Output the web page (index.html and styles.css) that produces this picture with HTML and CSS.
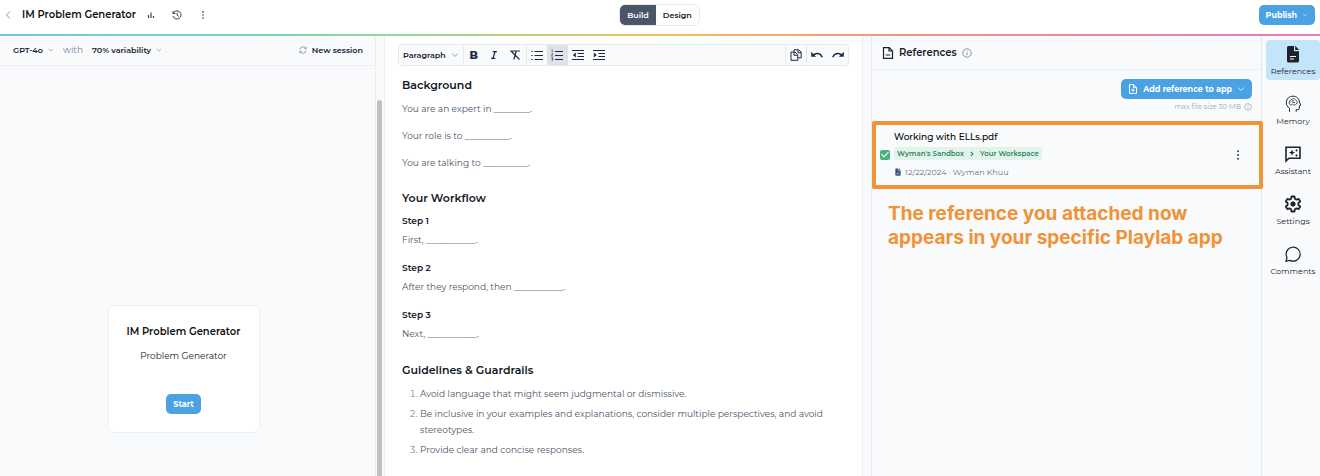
FILE: index.html
```html
<!DOCTYPE html>
<html lang="en">
<head>
<meta charset="utf-8">
<meta name="viewport" content="width=device-width, initial-scale=1">
<title>IM Problem Generator</title>
<link rel="stylesheet" href="styles.css">
</head>
<body>
<svg class="defs" aria-hidden="true">
  <symbol id="chevron" viewBox="0 0 10 10"><path d="M1.500 3.200 5 6.800l3.500-3.600"/></symbol>
  <symbol id="dots" viewBox="0 0 10 10"><g fill="currentColor" stroke="none"><circle cx="5" cy="1.300" r="1"/><circle cx="5" cy="5" r="1"/><circle cx="5" cy="8.700" r="1"/></g></symbol>
  <symbol id="info" viewBox="0 0 10 10"><circle cx="5" cy="5" r="4.200"/><path d="M5 4.500v2.700M5 2.600v.8"/></symbol>
  <symbol id="doc-solid" viewBox="0 0 16 18"><path fill="currentColor" stroke="none" d="M3.500 1H9v5.200h5V16a1.500 1.500 0 0 1-1.500 1.500h-9A1.500 1.500 0 0 1 2 16V2.500A1.500 1.500 0 0 1 3.500 1Z"/><path fill="currentColor" stroke="none" d="m10.200.8 4 4.200h-4Z"/><path stroke="#fff" stroke-width="1" d="M5 11.500h6M5 14h4"/></symbol>
</svg>
<div class="app">
  <header class="topbar">
    <div class="topbar-left">
      <button class="icon-btn muted" aria-label="Back"><svg class="i10" viewBox="0 0 10 10"><path d="M6 1.500 2.500 5 6 8.500"/></svg></button>
      <h1 class="app-title">IM Problem Generator</h1>
      <button class="icon-btn" aria-label="Statistics"><svg class="i10" viewBox="0 0 10 10"><path stroke-width="1.200" d="M2.500 8V5M5 8V2.500M7.500 8V6"/></svg></button>
      <button class="icon-btn" aria-label="History"><svg class="i10" viewBox="0 0 10 10"><path d="M1 1v2.500h2.500M1.200 3.300A4.100 4.100 0 1 1 1 6M5.200 2.700v2.600L7 6.500"/></svg></button>
      <button class="icon-btn" aria-label="More options"><svg class="i10" viewBox="-1 -1 12 12"><use href="#dots" width="10" height="10"/></svg></button>
    </div>
    <div class="tabs">
      <button class="tab tab-active">Build</button><button class="tab">Design</button>
    </div>
    <div class="topbar-right"><button class="btn">Publish <svg class="i6 soft"><use href="#chevron"/></svg></button></div>
  </header>

  <main class="panes">
    <section class="preview">
      <div class="preview-main">
        <div class="preview-bar">
          <button class="link-btn">GPT-4o <svg class="i6"><use href="#chevron"/></svg></button>
          <span class="with">with</span>
          <button class="link-btn">70% variability <svg class="i6"><use href="#chevron"/></svg></button>
          <button class="link-btn session"><svg class="i8" viewBox="0 0 10 10"><path d="M1.200 4.500A3.900 3.900 0 0 1 8.500 3M8.800 5.500A3.900 3.900 0 0 1 1.500 7M9 1v2.200H6.800M1 9V6.800h2.200"/></svg>New session</button>
        </div>
        <div class="preview-stage">
          <div class="card">
            <h2 class="card-title">IM Problem Generator</h2>
            <p class="card-text">Problem Generator</p>
            <button class="btn btn-start">Start</button>
          </div>
        </div>
      </div>
      <div class="scroll"><div class="scroll-thumb"></div></div>
    </section>

    <section class="editor">
      <div class="tools">
        <button class="style-btn">Paragraph <svg class="i8"><use href="#chevron"/></svg></button>
        <button class="tool bold" aria-label="Bold">B</button>
        <button class="tool" aria-label="Italic"><svg class="i10" viewBox="0 0 12 12"><path stroke-width="1.600" d="M4.500 2h5M2.500 10h5M7.300 2 4.700 10"/></svg></button>
        <button class="tool" aria-label="Clear formatting"><svg class="i12" viewBox="0 0 12 12"><path stroke-width="1.200" d="M3 2h8M7.300 2 4.800 10.500M1.500 1.500l9 9"/></svg></button>
        <button class="tool split" aria-label="Bulleted list"><svg class="i12" viewBox="0 0 12 12"><path stroke-width="1.200" d="M3.500 2.500H12M3.500 6.500H12M3.500 10.500H12M.3 2.500h1.400M.3 6.500h1.400M.3 10.500h1.400"/></svg></button>
        <button class="tool tool-active" aria-label="Numbered list"><svg class="i12" viewBox="0 0 12 12"><path stroke-width="1.200" d="M4 2.500h8M4 6.500h8M4 10.500h8"/><path stroke-width=".6" d="M.5.800h.8v2.400M.4 4.800h1.400L.4 7.200h1.400M.4 8.800h1.400v2.400H.4M.8 10h1"/></svg></button>
        <button class="tool" aria-label="Decrease indent"><svg class="i12" viewBox="0 0 12 12"><path stroke-width="1.200" d="M0 1.500h12M5.500 4.500H12M5.500 7.500H12M0 10.500h12"/><path fill="currentColor" stroke="none" d="M3.800 3.500v5L.8 6Z"/></svg></button>
        <button class="tool" aria-label="Increase indent"><svg class="i12" viewBox="0 0 12 12"><path stroke-width="1.200" d="M0 1.500h12M5.500 4.500H12M5.500 7.500H12M0 10.500h12"/><path fill="currentColor" stroke="none" d="M.8 3.500v5l3-2.500Z"/></svg></button>
        <button class="tool split push" aria-label="Copy"><svg class="i12" viewBox="0 0 12 12"><path d="M4 3V.8h4.500l2.700 2.400v5.600H8M8 .8v3h3.200M4 3H1v8.300h6.800V6L5 3H4v3.300h3.500"/></svg></button>
        <button class="tool split" aria-label="Undo"><svg class="i12" viewBox="0 0 12 12"><path stroke-width="1.500" d="M2 6.200C5 3.400 9.400 4 11.300 8.300"/><path fill="currentColor" stroke="none" d="M.2 2.800v5h5Z"/></svg></button>
        <button class="tool" aria-label="Redo"><svg class="i12" viewBox="0 0 12 12"><path stroke-width="1.500" d="M10 6.200C7 3.400 2.600 4 .7 8.300"/><path fill="currentColor" stroke="none" d="M11.800 2.800v5h-5Z"/></svg></button>
      </div>
      <article class="doc">
        <h2>Background</h2>
        <div class="lines">
          <p>You are an expert in ________.</p>
          <p>Your role is to __________.</p>
          <p>You are talking to __________.</p>
        </div>
        <h2>Your Workflow</h2>
        <div class="steps">
          <div><h3>Step 1</h3><p>First, ___________.</p></div>
          <div><h3>Step 2</h3><p>After they respond, then ___________.</p></div>
          <div><h3>Step 3</h3><p>Next, ___________.</p></div>
        </div>
        <h2>Guidelines &amp; Guardrails</h2>
        <ol>
          <li>Avoid language that might seem judgmental or dismissive.</li>
          <li>Be inclusive in your examples and explanations, consider multiple perspectives, and avoid stereotypes.</li>
          <li>Provide clear and concise responses.</li>
        </ol>
      </article>
    </section>

    <section class="refs">
      <div class="refs-head">
        <svg class="i12" viewBox="0 0 12 12"><path stroke-width="1.200" d="M1.500.7h5.700l3.300 3.200v7.400h-9ZM7 .8V4h3.400M3.700 8h4.600"/></svg>
        <h2>References</h2>
        <svg class="i10 muted"><use href="#info"/></svg>
      </div>
      <div class="refs-actions">
        <button class="btn"><svg class="i10" viewBox="0 0 10 10"><path d="M1.500.6h4.200l2.800 2.800v6h-7ZM5.500.7v2.900h3M5 4.600v3M3.500 6.100h3"/></svg>Add reference to app <svg class="i8"><use href="#chevron"/></svg></button>
        <p class="limit">max file size 30 MB <svg class="i8"><use href="#info"/></svg></p>
      </div>
      <div class="ref-item">
        <input class="check" type="checkbox" id="ref1" checked>
        <div class="ref-body">
          <label class="ref-name" for="ref1">Working with ELLs.pdf</label>
          <div class="path"><span>Wyman's Sandbox</span><svg class="i6" viewBox="0 0 10 10"><path stroke-width="1.800" d="M3 1.500 6.500 5 3 8.500"/></svg><span>Your Workspace</span></div>
          <p class="meta"><svg class="i8"><use href="#doc-solid"/></svg>12/22/2024 · Wyman Khuu</p>
        </div>
        <button class="icon-btn" aria-label="Reference options"><svg class="i10"><use href="#dots"/></svg></button>
      </div>
      <p class="note">The reference you attached now appears in your specific Playlab app</p>
    </section>

    <nav class="rail">
      <button class="rail-item rail-active"><svg class="i18"><use href="#doc-solid"/></svg>References</button>
      <button class="rail-item"><svg class="i18" viewBox="0 0 18 18"><path d="M5.500 16.800v-3.500C3.500 12 2.300 10 2.300 7.500 2.300 3.900 5.200 1.200 9 1.200c3.700 0 6.300 2.500 6.500 6l1.200 3-1.400.6v2.500c0 .9-.6 1.400-1.500 1.400h-1.600v2.100"/><path stroke-width=".8" d="M6 9.500C4.500 8 5 5.500 7 5c1-1.700 3.800-1.600 4.700 0 1.700.3 2 2.900.7 4-.9 1.300-3 1.300-3.700 0-.9 1.100-2 1.200-2.700.5M9 5v2.500h2M6.500 7h1"/></svg>Memory</button>
      <button class="rail-item"><svg class="i18" viewBox="0 0 18 18"><path stroke-width="1.600" d="M2 2.300h14v10.900H5L2 16Z"/><path fill="currentColor" stroke="none" d="m8 4.500.9 2.200 2.200.9-2.200.9L8 10.700l-.9-2.200-2.200-.9 2.200-.9ZM12.500 3.800l.5 1.100 1.100.5-1.100.5-.5 1.100-.5-1.100-1.100-.5 1.100-.5ZM12.500 8.800l.5 1.100 1.100.5-1.100.5-.5 1.100-.5-1.100-1.100-.5 1.100-.5Z"/></svg>Assistant</button>
      <button class="rail-item"><svg class="i18" viewBox="0 0 18 18"><path stroke-width="1.800" stroke-linejoin="round" d="m7.500 1.500-.4 2.300-1.600.9-2.200-.8-1.500 2.600L3.600 8v2l-1.800 1.500 1.500 2.600 2.200-.8 1.600.9.4 2.300h3l.4-2.300 1.600-.9 2.200.8 1.500-2.600-1.800-1.500V8l1.800-1.500-1.500-2.600-2.200.8-1.600-.9-.4-2.300Z"/><circle cx="9" cy="9" r="2.200" fill="currentColor"/></svg>Settings</button>
      <button class="rail-item"><svg class="i18" viewBox="0 0 18 18"><path stroke-width="1.200" d="M3 12.500A7 7 0 1 1 6 15.400L2 16.200Z"/></svg>Comments</button>
    </nav>
  </main>
</div>
</body>
</html>
```
FILE: styles.css
```css
* { box-sizing: border-box; }
body {
  margin: 0;
  font: 9px/16px Montserrat, Inter, "Open Sans", sans-serif;
  color: #1a202c;
  background: #f8fafc;
}
h1, h2, h3, p, ol { margin: 0; padding: 0; }
button {
  margin: 0;
  padding: 0;
  border: 0;
  background: none;
  font: inherit;
  color: inherit;
  display: inline-flex;
  align-items: center;
  cursor: pointer;
}
svg { fill: none; stroke: currentColor; stroke-width: 1; flex: none; display: block; }
.defs { position: absolute; width: 0; height: 0; }
.i6 { width: 6px; height: 6px; }
.i8 { width: 8px; height: 8px; }
.i10 { width: 10px; height: 10px; }
.i12 { width: 12px; height: 12px; }
.i18 { width: 18px; height: 18px; }
.muted { color: #8b93a1; }
.soft { opacity: 0.7; }

.app { min-height: 100vh; display: flex; flex-direction: column; }
.topbar {
  display: grid;
  grid-template-columns: 1fr auto 1fr;
  align-items: center;
  padding: 3px 5px 8px 4px;
  background: #fff;
  border-top: 1px solid #e5e5e5;
  border-bottom: 2px solid;
  border-image: linear-gradient(90deg, #6ec6ee, #74d3c0 18%, #8fd99a 30%, #f6c05c 50%, #f59a7c 64%, #ee85a0 82%, #e07cc8) 2;
  border-image-width: 0 0 2px;
}
.topbar-left { display: flex; align-items: center; gap: 16px; }
.app-title { margin: 0 -6px 0 -8px; font-size: 10px; font-weight: 600; color: #111; }
.icon-btn { color: #3a4352; }
.icon-btn.muted { color: #8b93a1; }
.tabs { display: flex; border: 1px solid #e8eaee; border-radius: 6px; overflow: hidden; }
.tab { padding: 2px 7px; font-size: 8px; font-weight: 600; }
.tab-active { background: #4a5568; color: #fff; }
.topbar-right { display: flex; justify-content: flex-end; }
.btn {
  gap: 5px;
  padding: 2px 7px;
  border-radius: 5px;
  background: #4aa1e4;
  color: #fff;
  font-size: 8px;
  font-weight: 700;
}

.panes {
  flex: 1;
  display: grid;
  grid-template-columns: minmax(0, 384fr) minmax(0, 487fr) minmax(0, 391fr) 58px;
}
.preview { display: flex; }
.preview-main { flex: 1; display: flex; flex-direction: column; border-right: 1px solid #eceef1; }
.preview-bar {
  display: flex;
  align-items: center;
  gap: 9px;
  padding: 6px 12px 7px 13px;
  border-bottom: 1px solid #eef0f3;
}
.link-btn { gap: 5px; font-size: 8px; font-weight: 600; }
.link-btn svg { color: #7b8494; }
.with { color: #7b8494; }
.session { margin-left: auto; }
.preview-stage {
  flex: 1;
  display: flex;
  align-items: flex-end;
  justify-content: center;
  padding: 0 8px 43px 0;
}
.card {
  display: flex;
  flex-direction: column;
  align-items: center;
  padding: 18px;
  border: 1px solid #edf0f4;
  border-radius: 6px;
  background: #fff;
}
.card-title { font-size: 10px; font-weight: 600; color: #111; }
.card-text { margin: 8px 0 30px; }
.scroll { width: 8px; padding: 64px 2px 0 1px; background: #fafafa; display: flex; }
.scroll-thumb { flex: 1; border-radius: 3px 3px 0 0; background: #c1c1c1; }

.editor {
  padding: 8px 13px 16px;
  margin-right: 8px;
  background: #fff;
  border: solid #eceef1;
  border-width: 0 1px;
}
.tools { display: flex; border: 1px solid #e6e9ee; border-radius: 4px; background: #f8fafc; color: #1e2a44; overflow: hidden; }
.style-btn { gap: 5px; padding: 0 4px; font-size: 8px; font-weight: 600; color: #1a202c; }
.style-btn svg { color: #7b8494; }
.style-btn + .tool { border-left: 1px solid #e6e9ee; }
.tool { width: 21px; height: 20px; justify-content: center; }
.bold { font-size: 11px; font-weight: 800; }
.split { border-left: 1px solid #e6e9ee; }
.tool-active { background: #e1e2e8; }
.push { margin-left: auto; }
.doc { padding: 11px 4px 0; color: #4a5568; }
.doc h2 { font-size: 11px; font-weight: 600; color: #111827; }
.doc h3 { font-size: 9px; font-weight: 600; color: #1a202c; }
.lines { display: grid; gap: 11px; margin: 8px 0 19px; }
.steps { display: grid; gap: 12px; margin: 7px 0 20px; }
.steps h3 { margin-bottom: 3px; }
.doc ol { display: grid; gap: 4px; margin-top: 8px; padding-left: 18px; }
.doc li::marker { color: #7b8494; }

.refs { border: solid #e4e7ec; border-width: 0 1px; }
.refs-head { display: flex; align-items: center; gap: 5px; padding: 9px 10px 8px; border-bottom: 1px solid #eceff3; }
.refs-head h2 { font-size: 10px; font-weight: 600; }
.refs-actions { display: flex; flex-direction: column; align-items: flex-end; padding: 9px 9px 6px; }
.limit { display: flex; align-items: center; gap: 3px; font-size: 7px; color: #a3aab6; }
.ref-item {
  position: relative;
  display: flex;
  align-items: center;
  gap: 4px;
  margin-right: -2px;
  padding: 4px 16px 5px 4px;
  border: 4px solid #f09236;
  border-radius: 2px;
}
.check {
  appearance: none;
  width: 10px;
  height: 10px;
  margin: 0;
  border-radius: 2px;
  background: #48b17c;
  display: grid;
  place-items: center;
}
.check:checked::before {
  content: "";
  width: 3px;
  height: 6px;
  margin-bottom: 2px;
  border: solid #fff;
  border-width: 0 1px 1px 0;
  transform: rotate(45deg);
}
.ref-body { flex: 1; display: flex; flex-direction: column; align-items: flex-start; }
.ref-name { color: #000; font-weight: 500; }
.path {
  display: flex;
  align-items: center;
  gap: 5px;
  padding: 0 3px;
  margin: 2px 0 4px;
  border-radius: 3px;
  background: #e2f3ec;
  color: #2f855a;
  font-size: 7px;
  line-height: 13px;
  font-weight: 600;
}
.meta { display: flex; align-items: center; gap: 3px; font-size: 8px; color: #6b7280; }
.meta svg { color: #3d4f77; }
.note {
  padding: 13px 20px 0 16px;
  color: #f09236;
  font: 700 19px/24px Inter, sans-serif;
}

.rail { display: flex; flex-direction: column; gap: 10px; padding: 4px 0 0 4px; }
.rail-item {
  flex-direction: column;
  padding: 5px 0 1px;
  border-radius: 4px;
  font-size: 8px;
  color: #1f2329;
}
.rail-active { background: #c3e5fa; }
```
